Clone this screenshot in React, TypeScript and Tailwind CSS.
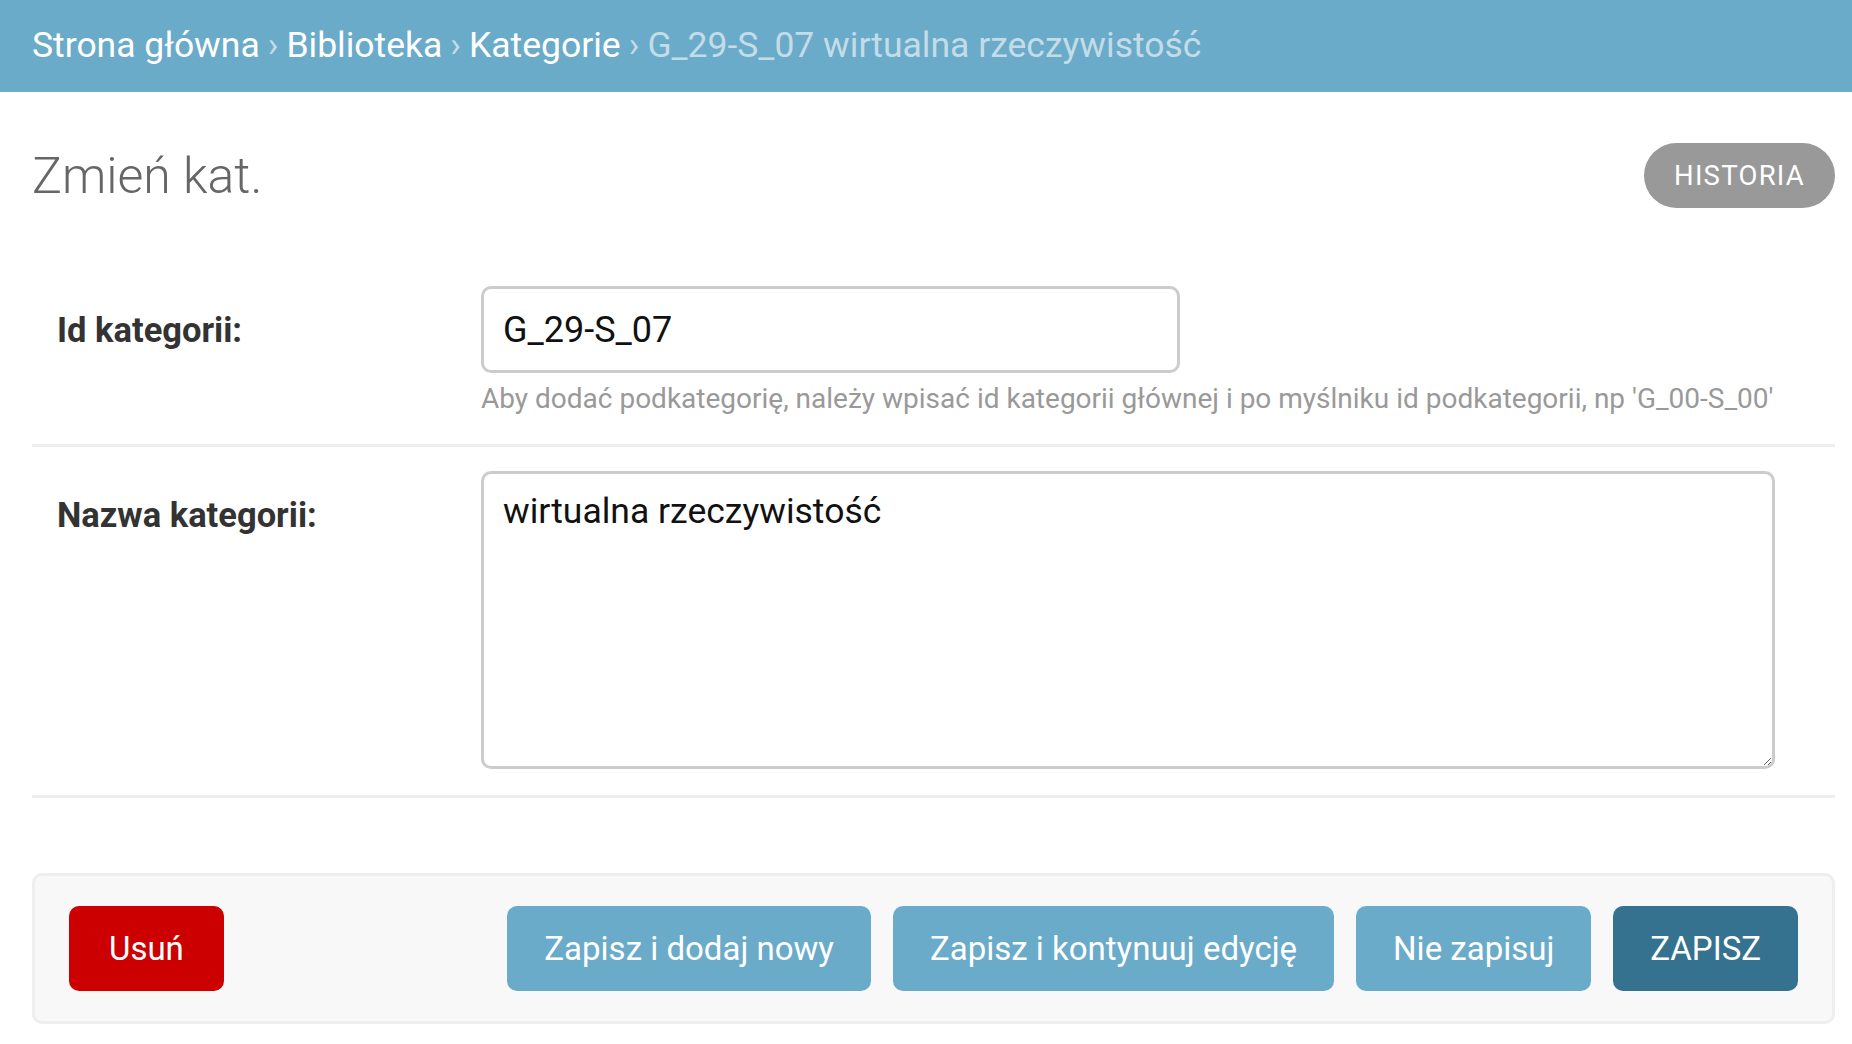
import React from 'react';

const crumbs = ['Strona główna', 'Biblioteka', 'Kategorie'];

const btn = 'h-[85px] px-[37px] rounded-[10px] text-white text-[33px]';

const App: React.FC = () => {
  return (
    <div className="min-h-screen bg-white font-['Roboto',sans-serif] text-[#333]">
      {/* breadcrumbs */}
      <div className="h-[92px] bg-[#6aabc9] flex items-center px-[32px] text-[35.5px] text-[#c4dce8]">
        {crumbs.map((c) => (
          <React.Fragment key={c}>
            <a className="text-white">{c}</a>
            <span className="mx-[8px]">›</span>
          </React.Fragment>
        ))}
        <span>G_29-S_07 wirtualna rzeczywistość</span>
      </div>

      <div className="pl-[32px] pr-[17px]">
        <div className="mt-[51px] h-[65px] flex items-center justify-between">
          <h1 className="text-[50px] font-light text-[#666] leading-none">Zmień kat.</h1>
          <a className="h-[65px] px-[30px] rounded-full bg-[#999] text-white text-[27.5px] tracking-[1.25px] flex items-center">
            HISTORIA
          </a>
        </div>

        <form className="mt-[53px]">
          <div className="grid grid-cols-[449px_1fr] pt-[25px] pb-[25px] border-b-[3px] border-[#eee]">
            <label className="pl-[25px] pt-[23px] leading-[42px] text-[34.5px] font-bold text-[#333]">Id kategorii:</label>
            <div>
              <input
                defaultValue="G_29-S_07"
                className="w-[699px] h-[87px] px-[19px] border-[3px] border-[#ccc] rounded-[10px] text-[36px] text-[#111] outline-none"
              />
              <div className="mt-[6px] leading-[40px] text-[28px] text-[#999] whitespace-nowrap">
                Aby dodać podkategorię, należy wpisać id kategorii głównej i po myślniku id podkategorii, np 'G_00-S_00'
              </div>
            </div>
          </div>

          <div className="grid grid-cols-[449px_1fr] pt-[24px] pb-[26px] border-b-[3px] border-[#eee]">
            <label className="pl-[25px] pt-[23px] leading-[42px] text-[34.5px] font-bold text-[#333]">Nazwa kategorii:</label>
            <textarea
              defaultValue="wirtualna rzeczywistość"
              className="block w-[1294px] h-[298px] px-[19px] pt-[16px] leading-[42px] border-[3px] border-[#ccc] rounded-[10px] text-[35.5px] text-[#111] outline-none"
            />
          </div>

          <div className="mt-[75px] h-[151px] bg-[#f8f8f8] border-[3px] border-[#eee] rounded-[10px] flex items-center pl-[34px] pr-[34px]">
            <a className={`${btn} px-[40px] bg-[#cc0000] flex items-center`}>Usuń</a>
            <div className="ml-auto flex gap-[22px]">
              <button type="button" className={`${btn} bg-[#6aabc9]`}>Zapisz i dodaj nowy</button>
              <button type="button" className={`${btn} bg-[#6aabc9]`}>Zapisz i kontynuuj edycję</button>
              <button type="button" className={`${btn} bg-[#6aabc9]`}>Nie zapisuj</button>
              <button type="button" className={`${btn} bg-[#347290]`}>ZAPISZ</button>
            </div>
          </div>
        </form>
      </div>
    </div>
  );
};

export default App;
